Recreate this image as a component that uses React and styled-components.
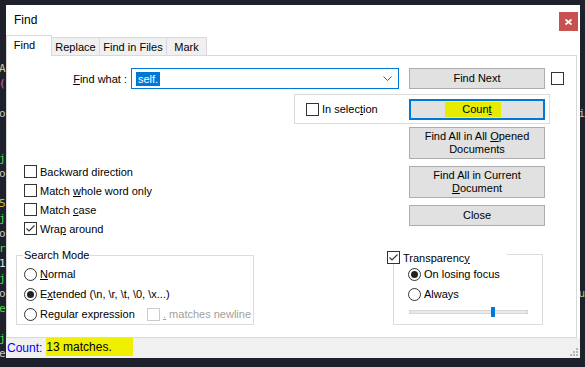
import React from 'react'
import styled, { createGlobalStyle } from 'styled-components'

const GlobalStyle = createGlobalStyle`
  html, body { margin: 0; padding: 0; }
  body { background: #1e202c; }
`

const Desktop = styled.div`
  position: relative;
  width: 585px;
  height: 367px;
  overflow: hidden;
  background: #1e202c;
`

const Editor = styled.div`
  padding-top: 1px;
  font-family: "DejaVu Sans Mono", monospace;
  font-size: 11px;
  line-height: 15px;
`

const CodeLine = styled.div`
  display: flex;
  justify-content: space-between;
  height: 15px;
  margin-left: -1px;
`

const Char = styled.span`
  color: ${p => p.$color || '#c8c8c8'};
`

const Window = styled.div`
  position: absolute;
  left: 6px;
  top: 5px;
  width: 574px;
  height: 353px;
  background: #fff;
  display: flex;
  flex-direction: column;
  font-family: "Liberation Sans", Arial, sans-serif;
  font-size: 11px;
  color: #000;
`

const TitleBar = styled.div`
  height: 30px;
  display: flex;
  justify-content: space-between;
  align-items: center;
  padding-left: 8px;
  font-size: 12px;
`

const CloseButton = styled.div`
  align-self: flex-start;
  margin: 7px 2px 0 0;
  width: 19px;
  height: 19px;
  background: #c75050;
  display: flex;
  align-items: center;
  justify-content: center;
`

const TabBar = styled.div`
  height: 20px;
  display: flex;
  align-items: flex-end;
`

const Tab = styled.div`
  box-sizing: border-box;
  width: ${p => p.$width}px;
  height: ${p => (p.$active ? 21 : 18)}px;
  margin-left: ${p => (p.$first ? 0 : -1)}px;
  margin-bottom: ${p => (p.$active ? -1 : 0)}px;
  border: 1px solid #d9d9d9;
  border-bottom: none;
  background: ${p => (p.$active ? '#fff' : '#f0f0f0')};
  text-align: center;
  padding: ${p => (p.$active ? '3px 9px 0 0' : '3px 0 0 0')};
  line-height: 13px;
  position: ${p => (p.$active ? 'relative' : 'static')};
  z-index: ${p => (p.$active ? 1 : 'auto')};
`

const Panel = styled.div`
  box-sizing: border-box;
  height: 283px;
  margin-right: 3px;
  border: 1px solid #d9d9d9;
  background: #fff;
`

const TopRow = styled.div`
  display: flex;
  align-items: center;
  height: 21px;
  margin-top: 12px;
`

const FieldLabel = styled.div`
  width: 120px;
  text-align: right;
`

const Combo = styled.div`
  box-sizing: border-box;
  width: 268px;
  height: 21px;
  margin-left: 4px;
  border: 1px solid #0078d7;
  display: flex;
  align-items: center;
  justify-content: space-between;
  padding: 0 6px 0 4px;
`

const Selected = styled.span`
  background: #0078d7;
  color: #fff;
  padding: 0 2px;
  line-height: 14px;
`

const Button = styled.button`
  box-sizing: border-box;
  width: 136px;
  height: ${p => (p.$tall ? 32 : 21)}px;
  margin-left: ${p => p.$offset || 0}px;
  border: ${p => (p.$focused ? '2px solid #0078d7' : '1px solid #adadad')};
  background: #e1e1e1;
  font-family: "Liberation Sans", Arial, sans-serif;
  font-size: 11px;
  line-height: 13px;
  color: #000;
  padding: 0;
  display: flex;
  align-items: center;
  justify-content: center;
  text-align: center;
`

const ButtonText = styled.span`
  display: block;
`

const Marker = styled.span`
  background: #e6eb00;
  padding: 1px 9px 1px 17px;
  margin-right: 8px;
`

const SelectionBox = styled.div`
  box-sizing: border-box;
  width: 256px;
  height: 30px;
  margin: 5px 0 0 287px;
  border: 1px solid #dcdcdc;
  display: flex;
  align-items: center;
  justify-content: space-between;
  padding: 0 4px 0 11px;
`

const Lower = styled.div`
  display: flex;
  margin-top: 3px;
`

const LeftCol = styled.div`
  width: 380px;
  padding-left: 9px;
  box-sizing: border-box;
`

const CheckList = styled.div`
  margin-top: 35px;
  padding-left: 8px;
`

const Option = styled.label`
  display: flex;
  align-items: center;
  gap: 3px;
  height: ${p => p.$h || 19}px;
  width: ${p => (p.$w ? `${p.$w}px` : 'auto')};
  flex-shrink: 0;
  color: ${p => (p.$disabled ? '#a0a0a0' : '#000')};
`

const Box = styled.span`
  box-sizing: border-box;
  width: 13px;
  height: 13px;
  flex-shrink: 0;
  border: 1px solid ${p => (p.$disabled ? '#cccccc' : '#333')};
  background: #fff;
  display: flex;
  align-items: center;
  justify-content: center;
  margin-left: ${p => p.$offset || 0}px;
`

const Radio = styled.span`
  box-sizing: border-box;
  width: 13px;
  height: 13px;
  flex-shrink: 0;
  border: 1px solid #333;
  border-radius: 50%;
  display: flex;
  align-items: center;
  justify-content: center;

  &::after {
    content: '';
    width: 7px;
    height: 7px;
    border-radius: 50%;
    background: #222;
    display: ${p => (p.$on ? 'block' : 'none')};
  }
`

const GroupBox = styled.fieldset`
  margin: 11px 0 0 0;
  padding: 2px 0 0 7px;
  width: 238px;
  box-sizing: border-box;
  border: 1px solid #dcdcdc;
  min-inline-size: 0;
`

const Legend = styled.legend`
  padding: 0 1px;
  margin-left: -1px;
  line-height: 13px;
`

const Row = styled.div`
  display: flex;
  align-items: center;
  height: 20px;
`

const RightCol = styled.div`
  display: flex;
  flex-direction: column;
`

const ButtonStack = styled.div`
  display: flex;
  flex-direction: column;
  gap: 7px;
  padding-left: 22px;
`

const TransparencyBox = styled.div`
  margin-top: 25px;
`

const TransparencyHead = styled.div`
  position: relative;
  z-index: 1;
  width: 120px;
  height: 13px;
  background: #fff;
  display: flex;
  align-items: center;
  gap: 3px;
`

const TransparencyFrame = styled.div`
  box-sizing: border-box;
  width: 150px;
  height: 71px;
  margin: -10px 0 0 6px;
  border: 1px solid #dcdcdc;
  padding: 9px 0 0 14px;
`

const Slider = styled.div`
  position: relative;
  width: 119px;
  height: 10px;
  margin: 3px 0 0 1px;
  display: flex;
  align-items: center;
`

const Track = styled.div`
  box-sizing: border-box;
  width: 100%;
  height: 4px;
  background: #e7eaea;
  border: 1px solid #d6d6d6;
`

const Thumb = styled.div`
  position: absolute;
  top: 0;
  width: 4px;
  height: 10px;
  background: #0078d7;
`

const StatusBar = styled.div`
  flex: 1;
  background: #f0f0f0;
  display: flex;
  align-items: flex-start;
  padding-left: 1px;
  font-size: 12px;
  line-height: 20px;
`

const CountLabel = styled.span`
  color: #0000ff;
  margin-right: 4px;
`

const Highlight = styled.span`
  background: #eef000;
  line-height: 18px;
  padding-right: 21px;
`

const Grip = styled.svg`
  margin: auto 2px 1px auto;
`

const U = styled.span`
  text-decoration: underline;
  text-underline-offset: 1px;
`

const Check = () => (
  <svg width="11" height="11" viewBox="0 0 11 11">
    <polyline points="1.5,5.5 4,8 9.5,2.5" fill="none" stroke="#333" strokeWidth="1.1" />
  </svg>
)

function CheckBox({ checked, disabled, offset }) {
  return (
    <Box $disabled={disabled} $offset={offset}>
      {checked && <Check />}
    </Box>
  )
}

const editorChars = {
  4: ['A', '#d6c98c'],
  5: ['(', '#d070c8'],
  7: ['o', '#c8c8c8', 'i', '#c8c8c8'],
  10: ['j', '#4cd84c'],
  11: ['o', '#c8c8c8'],
  13: ['5', '#d8b040'],
  14: ['j', '#4cd84c'],
  15: ['o', '#c8c8c8'],
  16: ['r', '#4cd84c'],
  17: ['1', '#e0e0e0'],
  18: ['j', '#4cd84c'],
  19: ['o', '#c8c8c8', 'u', '#a8c8a0'],
  20: ['e', '#4cd84c'],
  22: ['j', '#4cd84c'],
  23: ['e', '#c8c8c8'],
}

const sliderValue = 71

export default function App() {
  const lines = Array.from({ length: 25 }, (_, i) => editorChars[i] || [])

  return (
    <>
      <GlobalStyle />
      <Desktop>
        <Editor>
          {lines.map((l, i) => (
            <CodeLine key={i}>
              <Char $color={l[1]}>{l[0] || '\u00a0'}</Char>
              <Char $color={l[3]}>{l[2] || '\u00a0'}</Char>
            </CodeLine>
          ))}
        </Editor>

        <Window>
          <TitleBar>
            <span>Find</span>
            <CloseButton>
              <svg width="7" height="6" viewBox="0 0 7 6">
                <path d="M0.5 0.5 L6.5 5.5 M6.5 0.5 L0.5 5.5" stroke="#fff" strokeWidth="1.8" />
              </svg>
            </CloseButton>
          </TitleBar>

          <TabBar>
            <Tab $width={46} $active $first>Find</Tab>
            <Tab $width={49}>Replace</Tab>
            <Tab $width={68}>Find in Files</Tab>
            <Tab $width={41}>Mark</Tab>
          </TabBar>

          <Panel>
            <TopRow>
              <FieldLabel><U>F</U>ind what :</FieldLabel>
              <Combo>
                <Selected>self.</Selected>
                <svg width="9" height="5" viewBox="0 0 9 5">
                  <polyline points="0.5,0.5 4.5,4.5 8.5,0.5" fill="none" stroke="#555" strokeWidth="1" />
                </svg>
              </Combo>
              <Button $offset={10}>Find Next</Button>
              <CheckBox offset={6} />
            </TopRow>

            <SelectionBox>
              <Option>
                <CheckBox />
                <span>In selec<U>t</U>ion</span>
              </Option>
              <Button $focused>
                <Marker>Coun<U>t</U></Marker>
              </Button>
            </SelectionBox>

            <Lower>
              <LeftCol>
                <CheckList>
                  <Option><CheckBox /><span>Backward direction</span></Option>
                  <Option><CheckBox /><span>Match <U>w</U>hole word only</span></Option>
                  <Option><CheckBox /><span>Match <U>c</U>ase</span></Option>
                  <Option><CheckBox checked /><span>Wra<U>p</U> around</span></Option>
                </CheckList>

                <GroupBox>
                  <Legend>Search Mode</Legend>
                  <Row>
                    <Option $h={20}><Radio /><span><U>N</U>ormal</span></Option>
                  </Row>
                  <Row>
                    <Option $h={20}><Radio $on /><span>E<U>x</U>tended (\n, \r, \t, \0, \x...)</span></Option>
                  </Row>
                  <Row>
                    <Option $h={20} $w={123}><Radio /><span>Re<U>g</U>ular expression</span></Option>
                    <Option $h={20} $disabled><CheckBox disabled /><span><U>.</U> matches newline</span></Option>
                  </Row>
                </GroupBox>
              </LeftCol>

              <RightCol>
                <ButtonStack>
                  <Button $tall><ButtonText>Find All in All <U>O</U>pened<br />Documents</ButtonText></Button>
                  <Button $tall><ButtonText>Find All in Current<br /><U>D</U>ocument</ButtonText></Button>
                  <Button>Close</Button>
                </ButtonStack>

                <TransparencyBox>
                  <TransparencyHead>
                    <CheckBox checked />
                    <span>Transparenc<U>y</U></span>
                  </TransparencyHead>
                  <TransparencyFrame>
                    <Row>
                      <Option $h={20}><Radio $on /><span>On losing focus</span></Option>
                    </Row>
                    <Row>
                      <Option $h={20}><Radio /><span>Always</span></Option>
                    </Row>
                    <Slider>
                      <Track />
                      <Thumb style={{ left: `${(sliderValue / 100) * 115}px` }} />
                    </Slider>
                  </TransparencyFrame>
                </TransparencyBox>
              </RightCol>
            </Lower>
          </Panel>

          <StatusBar>
            <CountLabel>Count:</CountLabel>
            <Highlight>13 matches.</Highlight>
            <Grip width="10" height="9" viewBox="0 0 10 9">
              <g fill="#b5b5b5">
                <rect x="8" y="0" width="2" height="2" />
                <rect x="5" y="3" width="2" height="2" />
                <rect x="8" y="3" width="2" height="2" />
                <rect x="2" y="6" width="2" height="2" />
                <rect x="5" y="6" width="2" height="2" />
                <rect x="8" y="6" width="2" height="2" />
              </g>
            </Grip>
          </StatusBar>
        </Window>
      </Desktop>
    </>
  )
}
